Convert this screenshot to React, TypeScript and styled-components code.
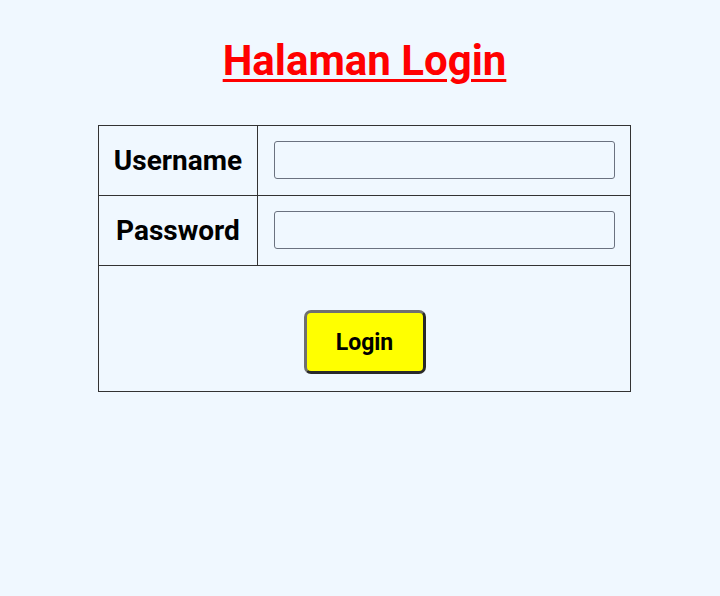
import React from "react";
import styled, { createGlobalStyle } from "styled-components";

const Global = createGlobalStyle`
  html, body { margin: 0; padding: 0; background: #f0f8ff; }
  body { font-family: Roboto, "Noto Sans", sans-serif; }
`;

const Page = styled.div`
  width: 720px;
  height: 596px;
  background: #f0f8ff;
  padding: 36px 0 0 9px;
  box-sizing: border-box;
`;

const Title = styled.h1`
  margin: 0 0 39px 0;
  text-align: center;
  font-size: 42px;
  line-height: 50px;
  font-weight: 700;
  color: #ff0000;
  text-decoration: underline;
  text-decoration-thickness: 3px;
  text-underline-offset: 4px;
`;

const Table = styled.table`
  margin: 0 auto;
  width: 533px;
  border-collapse: collapse;
  border: 1px solid #333;
`;

const Row = styled.tr<{ $h: number }>`
  height: ${(p) => p.$h}px;
`;

const LabelCell = styled.td`
  width: 158px;
  border: 1px solid #333;
  text-align: center;
  font-size: 28px;
  font-weight: 700;
  color: #000;
  padding: 0;
`;

const InputCell = styled.td`
  border: 1px solid #333;
  padding: 0 15px 2px 16px;
`;

const Field = styled.input`
  display: block;
  width: 100%;
  height: 38px;
  box-sizing: border-box;
  border: 1px solid #6b7280;
  border-radius: 3px;
  background: #f0f8ff;
  outline: none;
`;

const ActionCell = styled.td`
  border: 1px solid #333;
  text-align: center;
  vertical-align: top;
  padding: 44px 0 0 0;
`;

const Button = styled.button`
  width: 122px;
  height: 64px;
  background: #ffff00;
  border: 3px solid;
  border-color: #707070 #2a2a2a #2a2a2a #707070;
  border-radius: 7px;
  font-family: Roboto, sans-serif;
  font-size: 23px;
  font-weight: 700;
  color: #000;
  cursor: pointer;
`;

export default function App() {
  return (
    <Page>
      <Global />
      <Title>Halaman Login</Title>
      <Table>
        <tbody>
          <Row $h={70}>
            <LabelCell>Username</LabelCell>
            <InputCell>
              <Field type="text" />
            </InputCell>
          </Row>
          <Row $h={70}>
            <LabelCell>Password</LabelCell>
            <InputCell>
              <Field type="password" />
            </InputCell>
          </Row>
          <Row $h={126}>
            <ActionCell colSpan={2}>
              <Button>Login</Button>
            </ActionCell>
          </Row>
        </tbody>
      </Table>
    </Page>
  );
}
